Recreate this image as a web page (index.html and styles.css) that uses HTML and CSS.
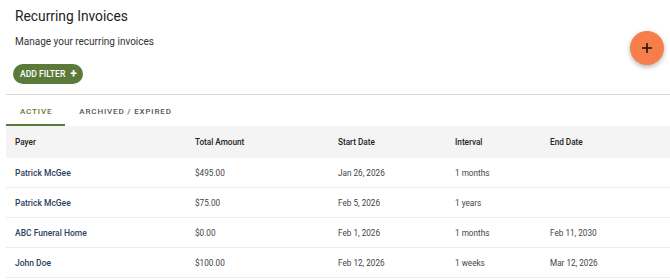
FILE: index.html
```html
<!DOCTYPE html>
<html lang="en">
<head>
  <meta charset="UTF-8">
  <meta name="viewport" content="width=device-width, initial-scale=1.0">
  <title>Recurring Invoices</title>
  <link rel="stylesheet" href="styles.css">
</head>
<body>
  <div class="page">
    <div class="page-header">
      <div class="header-text">
        <h1>Recurring Invoices</h1>
        <p class="subtitle">Manage your recurring invoices</p>
        <button type="button" class="add-filter">ADD FILTER <span class="plus">+</span></button>
      </div>
      <button type="button" class="fab" aria-label="New recurring invoice">
        <svg width="12" height="12" viewBox="0 0 12 12"><path d="M6 1v10M1 6h10" stroke="#111" stroke-width="1.5" fill="none"/></svg>
      </button>
    </div>

    <div class="tabs">
      <div class="tab active">ACTIVE</div>
      <div class="tab">ARCHIVED / EXPIRED</div>
    </div>

    <table class="invoices">
      <thead>
        <tr>
          <th class="col-payer">Payer</th>
          <th class="col-amount">Total Amount</th>
          <th class="col-start">Start Date</th>
          <th class="col-interval">Interval</th>
          <th>End Date</th>
        </tr>
      </thead>
      <tbody>
        <tr>
          <td class="payer">Patrick McGee</td>
          <td>$495.00</td>
          <td>Jan 26, 2026</td>
          <td>1 months</td>
          <td></td>
        </tr>
        <tr>
          <td class="payer">Patrick McGee</td>
          <td>$75.00</td>
          <td>Feb 5, 2026</td>
          <td>1 years</td>
          <td></td>
        </tr>
        <tr>
          <td class="payer">ABC Funeral Home</td>
          <td>$0.00</td>
          <td>Feb 1, 2026</td>
          <td>1 months</td>
          <td>Feb 11, 2030</td>
        </tr>
        <tr>
          <td class="payer">John Doe</td>
          <td>$100.00</td>
          <td>Feb 12, 2026</td>
          <td>1 weeks</td>
          <td>Mar 12, 2026</td>
        </tr>
      </tbody>
    </table>
  </div>
</body>
</html>
```

FILE: styles.css
```css
body {
  margin: 0;
  font-family: Roboto, 'Liberation Sans', Arial, sans-serif;
  color: #333;
  background: #fff;
}
.page {
  padding: 0 0 0 6px;
}
.page-header {
  display: flex;
  justify-content: space-between;
  align-items: flex-start;
  padding: 0 6px 10px 9px;
  border-bottom: 1px solid #d8d8d8;
}
h1 {
  font-size: 13.8px;
  font-weight: 400;
  color: #222;
  margin: 7px 0 0;
  line-height: 18px;
}
.subtitle {
  font-size: 10px;
  color: #333;
  margin: 10px 0 0;
  line-height: 14px;
}
.add-filter {
  margin: 15px 0 0 -2px;
  background-color: #5b7a3a;
  color: #fff;
  border: none;
  border-radius: 10px;
  height: 20px;
  padding: 0 6px 0 7px;
  font-family: inherit;
  font-size: 8.6px;
  font-weight: 500;
  display: flex;
  align-items: center;
  gap: 5px;
  cursor: pointer;
}
.add-filter .plus {
  font-size: 12px;
  font-weight: 700;
  line-height: 1;
}
.fab {
  margin-top: 31px;
  width: 34px;
  height: 34px;
  border-radius: 50%;
  border: none;
  background-color: #f77d4a;
  box-shadow: 0 2px 5px rgba(0, 0, 0, 0.3);
  display: flex;
  align-items: center;
  justify-content: center;
  cursor: pointer;
}
.tabs {
  display: flex;
  height: 31px;
  box-sizing: border-box;
}
.tab {
  font-size: 8px;
  font-weight: 500;
  letter-spacing: 0.85px;
  color: #555;
  padding: 4px 13px 0 14px;
  display: flex;
  align-items: center;
  border-bottom: 2px solid transparent;
}
.tab.active {
  color: #5b7a3a;
  border-bottom-color: #5b7a3a;
}
.invoices {
  width: 100%;
  border-collapse: collapse;
  font-size: 8.2px;
}
.invoices th {
  background: #f4f4f4;
  text-align: left;
  font-weight: 500;
  color: #222;
  height: 32px;
  padding: 0 9px;
}
.invoices td {
  height: 29px;
  padding: 0 9px;
  border-bottom: 1px solid #ececec;
  color: #444;
}
.invoices td.payer {
  font-size: 8.5px;
  color: #2c4160;
  font-weight: 500;
}
.col-payer { width: 162px; }
.col-amount { width: 125px; }
.col-start { width: 99px; }
.col-interval { width: 77px; }
```
